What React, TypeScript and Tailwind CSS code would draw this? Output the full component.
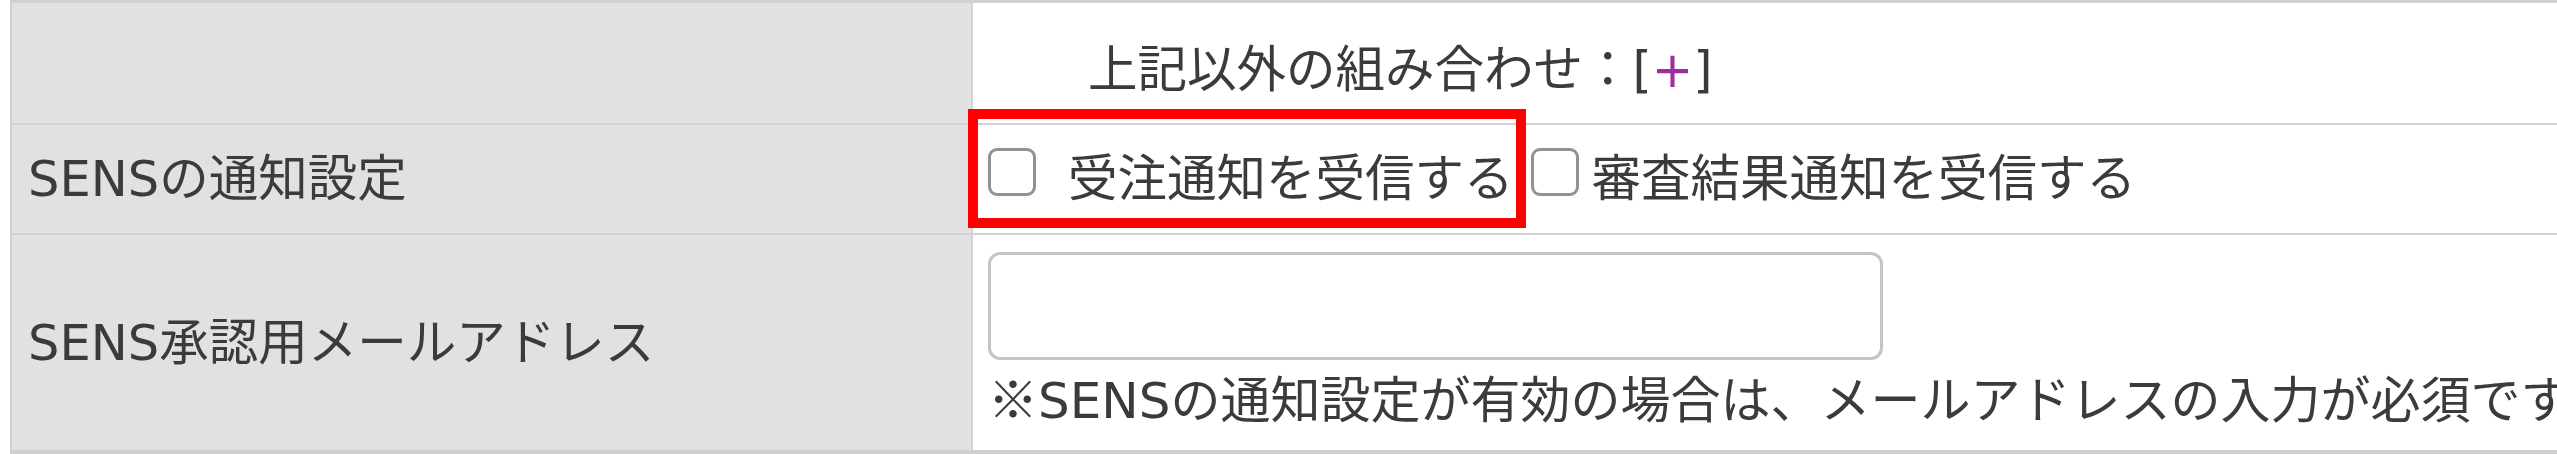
import type { ReactNode } from "react";

const font = "font-['DejaVu_Sans','Noto_Sans_CJK_JP',sans-serif]";

function Checkbox() {
    return (
        <span className="inline-block w-[48px] h-[48px] shrink-0 rounded-[9px] border-[3px] border-[#929292] bg-white mb-[14px]" />
    );
}

function Row({
    label,
    height,
    first,
    children,
}: {
    label?: string;
    height: string;
    first?: boolean;
    children: ReactNode;
}) {
    return (
        <div
            className={`flex ${height} ${first ? "border-t-[3px]" : "border-t-2"} border-[#d2d2d2]`}
        >
            <div className="w-[961px] shrink-0 flex items-center pl-[16px] bg-[#e1e1e1] border-r-2 border-[#d4d4d4] whitespace-nowrap">
                {label}
            </div>
            <div className="flex-1 min-w-0 pl-[15px] bg-white">{children}</div>
        </div>
    );
}

export default function App() {
    return (
        <div
            className={`w-[2557px] h-[454px] overflow-hidden bg-white pl-[10px] ${font} text-[49.5px] leading-[72px] text-[#3b3b3b]`}
        >
            <div className="border-l-2 border-b-[4px] border-[#cfcfcf]">
                <Row height="h-[123px]" first>
                    <div className="h-full flex items-center pt-[14px] pl-[100px] whitespace-nowrap">
                        上記以外の組み合わせ：[<span className="text-[#9b2f9b]">+</span>]
                    </div>
                </Row>

                <Row label="SENSの通知設定" height="h-[110px]">
                    <div className="h-full flex items-center whitespace-nowrap">
                        <label className="relative flex items-center">
                            <Checkbox />
                            <span className="ml-[32px]">受注通知を受信する</span>
                            <span className="absolute -left-[20px] -right-[12px] -top-[34px] -bottom-[13px] border-[10px] border-[#ff0000] pointer-events-none" />
                        </label>
                        <label className="flex items-center ml-[17px]">
                            <Checkbox />
                            <span className="ml-[13px]">審査結果通知を受信する</span>
                        </label>
                    </div>
                </Row>

                <Row label="SENS承認用メールアドレス" height="h-[217px]">
                    <div className="pt-[17px]">
                        <input
                            type="text"
                            className="block w-[895px] h-[108px] rounded-[12px] border-[3px] border-[#c4c4c4] bg-white outline-none"
                        />
                        <p className="whitespace-nowrap text-[50px]">
                            <span className="font-['Noto_Sans_CJK_JP',sans-serif]">※</span>
                            SENSの通知設定が有効の場合は、メールアドレスの入力が必須です。
                        </p>
                    </div>
                </Row>
            </div>
        </div>
    );
}
